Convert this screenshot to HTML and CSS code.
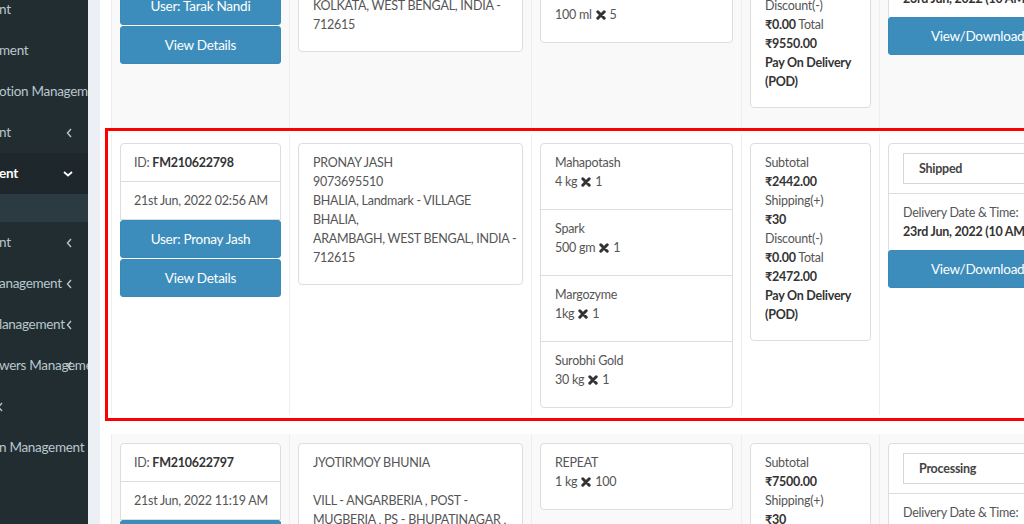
FILE: index.html
```html
<!DOCTYPE html>
<html>
<head>
<meta charset="utf-8">
<link rel="stylesheet" href="styles.css">
</head>
<body>
<div class="app">
  <aside class="sidebar">
    <ul class="menu">
      <li class="item"><span class="lbl">nt</span></li>
      <li class="item"><span class="lbl">ment</span></li>
      <li class="item"><span class="lbl">otion Management</span></li>
      <li class="item"><span class="lbl">nt</span><svg class="chev" viewBox="0 0 6 10"><path d="M5 1 L1.5 5 L5 9"/></svg></li>
      <li class="item active"><span class="lbl">ent</span><svg class="chev-down" viewBox="0 0 10 6"><path d="M1 1 L5 4.5 L9 1"/></svg></li>
      <li class="subitem"></li>
      <li class="item"><span class="lbl">nt</span><svg class="chev" viewBox="0 0 6 10"><path d="M5 1 L1.5 5 L5 9"/></svg></li>
      <li class="item"><span class="lbl">anagement</span><svg class="chev" viewBox="0 0 6 10"><path d="M5 1 L1.5 5 L5 9"/></svg></li>
      <li class="item"><span class="lbl">lanagement</span><svg class="chev" viewBox="0 0 6 10"><path d="M5 1 L1.5 5 L5 9"/></svg></li>
      <li class="item"><span class="lbl">wers Management</span><svg class="chev" viewBox="0 0 6 10"><path d="M5 1 L1.5 5 L5 9"/></svg></li>
      <li class="item"><svg class="chev chev-far" viewBox="0 0 6 10"><path d="M5 1 L1.5 5 L5 9"/></svg></li>
      <li class="item"><span class="lbl">n Management</span></li>
    </ul>
  </aside>

  <main class="content">
    <div class="box">
      <div class="tbl">

        <div class="order striped first">
          <div class="cell c1">
            <div class="lg">
              <div class="lg-item">ID: <b>FM210622799</b></div>
              <div class="lg-item">21st Jun, 2022 01:10 AM</div>
              <div class="btn">User: Tarak Nandi</div>
              <div class="btn">View Details</div>
            </div>
          </div>
          <div class="cell c2">
            <div class="card addr">
              <div>TARAK NANDI</div>
              <div>9831245670</div>
              <div>SALT LAKE, Landmark - NEAR</div>
              <div>CITY CENTRE,</div>
              <div>KOLKATA, WEST BENGAL, INDIA -</div>
              <div>712615</div>
            </div>
          </div>
          <div class="cell c3">
            <div class="card">
              <div class="prod">
                <div>Mahapotash</div>
                <div>4 kg <svg class="x" viewBox="0 0 10 10"><path d="M1.8 1.8 L8.2 8.2 M8.2 1.8 L1.8 8.2"/></svg> 2</div>
              </div>
              <div class="prod">
                <div>SPIRIT</div>
                <div>100 ml <svg class="x" viewBox="0 0 10 10"><path d="M1.8 1.8 L8.2 8.2 M8.2 1.8 L1.8 8.2"/></svg> 5</div>
              </div>
            </div>
          </div>
          <div class="cell c4">
            <div class="card totals">
              <div>Subtotal</div>
              <div class="b">₹9520.00</div>
              <div>Shipping(+)</div>
              <div class="b">₹30</div>
              <div>Discount(-)</div>
              <div><b>₹0.00</b> Total</div>
              <div class="b">₹9550.00</div>
              <div class="b">Pay On Delivery</div>
              <div class="b">(POD)</div>
            </div>
          </div>
          <div class="cell c5">
            <div class="card">
              <div class="st"><div class="select">Shipped</div></div>
              <div class="dl">
                <div>Delivery Date &amp; Time:</div>
                <div class="b nowrap">23rd Jun, 2022 (10 AM - 2 PM)</div>
              </div>
              <div class="btn wide">View/Download Invoice</div>
            </div>
          </div>
        </div>

        <div class="order hl">
          <div class="cell c1">
            <div class="lg">
              <div class="lg-item">ID: <b>FM210622798</b></div>
              <div class="lg-item">21st Jun, 2022 02:56 AM</div>
              <div class="btn">User: Pronay Jash</div>
              <div class="btn">View Details</div>
            </div>
          </div>
          <div class="cell c2">
            <div class="card addr">
              <div>PRONAY JASH</div>
              <div>9073695510</div>
              <div>BHALIA, Landmark - VILLAGE</div>
              <div>BHALIA,</div>
              <div>ARAMBAGH, WEST BENGAL, INDIA -</div>
              <div>712615</div>
            </div>
          </div>
          <div class="cell c3">
            <div class="card">
              <div class="prod">
                <div>Mahapotash</div>
                <div>4 kg <svg class="x" viewBox="0 0 10 10"><path d="M1.8 1.8 L8.2 8.2 M8.2 1.8 L1.8 8.2"/></svg> 1</div>
              </div>
              <div class="prod">
                <div>Spark</div>
                <div>500 gm <svg class="x" viewBox="0 0 10 10"><path d="M1.8 1.8 L8.2 8.2 M8.2 1.8 L1.8 8.2"/></svg> 1</div>
              </div>
              <div class="prod">
                <div>Margozyme</div>
                <div>1kg <svg class="x" viewBox="0 0 10 10"><path d="M1.8 1.8 L8.2 8.2 M8.2 1.8 L1.8 8.2"/></svg> 1</div>
              </div>
              <div class="prod">
                <div>Surobhi Gold</div>
                <div>30 kg <svg class="x" viewBox="0 0 10 10"><path d="M1.8 1.8 L8.2 8.2 M8.2 1.8 L1.8 8.2"/></svg> 1</div>
              </div>
            </div>
          </div>
          <div class="cell c4">
            <div class="card totals">
              <div>Subtotal</div>
              <div class="b">₹2442.00</div>
              <div>Shipping(+)</div>
              <div class="b">₹30</div>
              <div>Discount(-)</div>
              <div><b>₹0.00</b> Total</div>
              <div class="b">₹2472.00</div>
              <div class="b">Pay On Delivery</div>
              <div class="b">(POD)</div>
            </div>
          </div>
          <div class="cell c5">
            <div class="card">
              <div class="st"><div class="select">Shipped</div></div>
              <div class="dl">
                <div>Delivery Date &amp; Time:</div>
                <div class="b nowrap">23rd Jun, 2022 (10 AM - 2 PM)</div>
              </div>
              <div class="btn wide">View/Download Invoice</div>
            </div>
          </div>
        </div>

        <div class="order striped last">
          <div class="cell c1">
            <div class="lg">
              <div class="lg-item">ID: <b>FM210622797</b></div>
              <div class="lg-item">21st Jun, 2022 11:19 AM</div>
              <div class="btn">User: Jyotirmoy Bhunia</div>
              <div class="btn">View Details</div>
            </div>
          </div>
          <div class="cell c2">
            <div class="card addr">
              <div>JYOTIRMOY BHUNIA</div>
              <div>&nbsp;</div>
              <div>VILL - ANGARBERIA , POST -</div>
              <div>MUGBERIA , PS - BHUPATINAGAR ,</div>
              <div>PURBA MEDINIPUR, WEST BENGAL,</div>
              <div>INDIA - 721425</div>
            </div>
          </div>
          <div class="cell c3">
            <div class="card">
              <div class="prod">
                <div>REPEAT</div>
                <div>1 kg <svg class="x" viewBox="0 0 10 10"><path d="M1.8 1.8 L8.2 8.2 M8.2 1.8 L1.8 8.2"/></svg> 100</div>
              </div>
            </div>
          </div>
          <div class="cell c4">
            <div class="card totals">
              <div>Subtotal</div>
              <div class="b">₹7500.00</div>
              <div>Shipping(+)</div>
              <div class="b">₹30</div>
              <div>Discount(-)</div>
              <div><b>₹0.00</b> Total</div>
              <div class="b">₹7530.00</div>
              <div class="b">Pay On Delivery</div>
              <div class="b">(POD)</div>
            </div>
          </div>
          <div class="cell c5">
            <div class="card">
              <div class="st"><div class="select">Processing</div></div>
              <div class="dl">
                <div>Delivery Date &amp; Time:</div>
                <div class="b nowrap">24th Jun, 2022 (10 AM - 2 PM)</div>
              </div>
              <div class="btn wide">View/Download Invoice</div>
            </div>
          </div>
        </div>

      </div>
    </div>
  </main>
</div>
</body>
</html>
```

FILE: styles.css
```css
* { box-sizing: border-box; }
html, body {
  margin: 0;
  padding: 0;
  width: 1024px;
  height: 524px;
  overflow: hidden;
  background: #ecf0f5;
  font-family: "Lato", "Noto Sans", sans-serif;
  font-size: 12.5px;
  letter-spacing: -0.25px;
  line-height: 19px;
  color: #555;
}
.app {
  display: flex;
  height: 524px;
}

/* sidebar */
.sidebar {
  flex: none;
  width: 88px;
  height: 524px;
  background: #222d32;
  overflow: hidden;
}
.menu {
  list-style: none;
  margin: -11px 0 0;
  padding: 0;
}
.item {
  position: relative;
  height: 41px;
  display: flex;
  align-items: center;
  white-space: nowrap;
  color: #b8c7ce;
  font-size: 13.5px;
  letter-spacing: -0.3px;
}
.lbl {
  margin-left: -1px;
}
.item.active {
  background: #1e282c;
  color: #fff;
  font-weight: bold;
}
.subitem {
  height: 28px;
  background: #2c3b41;
}
.chev {
  position: absolute;
  left: 66px;
  top: 16px;
  width: 6px;
  height: 10px;
  fill: none;
  stroke: #b8c7ce;
  stroke-width: 1.4;
}
.chev-far {
  left: -3px;
}
.chev-down {
  position: absolute;
  left: 63px;
  top: 18px;
  width: 10px;
  height: 6px;
  fill: none;
  stroke: #fff;
  stroke-width: 1.8;
}

/* content */
.content {
  flex: 1;
  padding-left: 12px;
  min-width: 0;
}
.box {
  background: #fff;
  height: 524px;
  padding-left: 11px;
  overflow: hidden;
}
.tbl {
  margin-top: -99px;
  width: 1100px;
}
.order {
  display: flex;
  align-items: stretch;
}
.order.striped { background: #f9f9f9; }
.order.first { min-height: 230px; }
.order.hl {
  margin-top: 3px;
  background: #fff;
  outline: 3px solid #ff0000;
  outline-offset: 3px;
}
.order.hl .cell { padding-bottom: 7px; }
.order.last { margin-top: 19px; }

.cell {
  flex: none;
  border-left: 1px solid #eeeeee;
  padding: 9px 8px 8px;
}
.c1 { width: 178px; }
.c2 { width: 242px; }
.c3 { width: 210px; }
.c4 { width: 138px; }
.c5 { width: 240px; }

.card {
  background: #fff;
  border: 1px solid #ddd;
  border-radius: 4px;
}

/* list group in first column */
.lg-item {
  background: #fff;
  border: 1px solid #ddd;
  padding: 9px 13px;
  margin-bottom: -1px;
  white-space: nowrap;
}
.lg-item:first-child { border-radius: 4px 4px 0 0; }
.lg-item:nth-child(2) { margin-bottom: 0; }
b, .b {
  font-weight: bold;
  color: #333;
}
.btn {
  background: #3c8dbc;
  border: 1px solid #3a89b7;
  border-radius: 3px;
  color: #fff;
  text-align: center;
  height: 38px;
  line-height: 36px;
  font-size: 13.5px;
  white-space: nowrap;
  overflow: hidden;
}
.btn + .btn { margin-top: 1px; }

.addr {
  padding: 9px 14px 17px;
  white-space: nowrap;
}
.prod {
  padding: 9px 14px 18px;
  white-space: nowrap;
}
.prod + .prod { border-top: 1px solid #ddd; }
.x {
  width: 10px;
  height: 10px;
  vertical-align: -1px;
  stroke: #333;
  stroke-width: 3;
  stroke-linecap: round;
  margin: 0 1px;
}
.totals {
  padding: 9px 14px 16px;
  white-space: nowrap;
}
.st {
  padding: 9px 14px;
  border-bottom: 1px solid #ddd;
}
.select {
  height: 31px;
  border: 1px solid #d2d6de;
  padding: 0 15px;
  line-height: 30px;
  font-weight: bold;
  color: #444;
}
.dl {
  padding: 9px 14px;
}
.nowrap { white-space: nowrap; }
.btn.wide {
  margin: 0 -1px -1px;
  border-radius: 3px;
}
```
